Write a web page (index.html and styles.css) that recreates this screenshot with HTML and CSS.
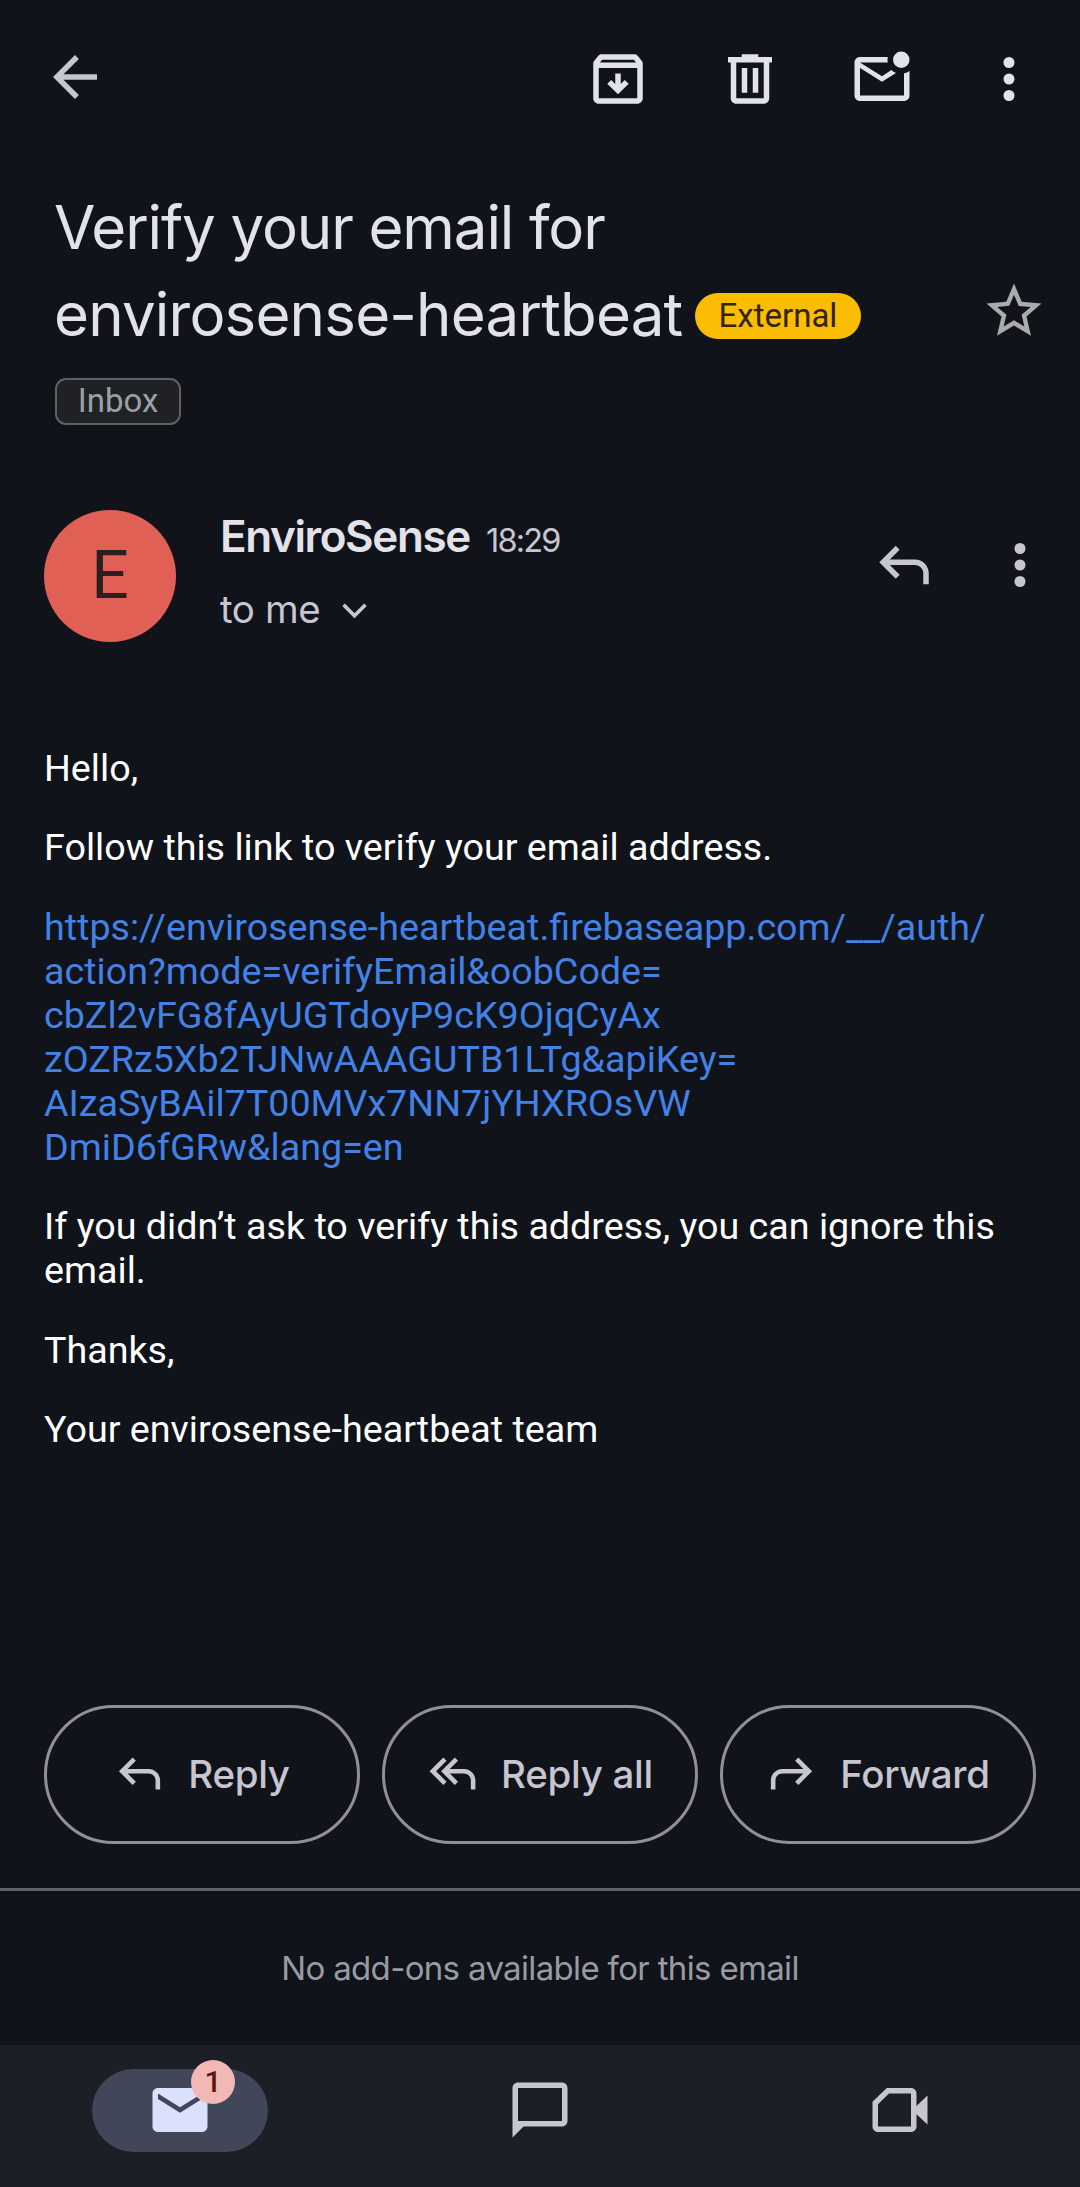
FILE: index.html
```
<!DOCTYPE html>
<html lang="en">
<head>
<meta charset="utf-8">
<title>Verify your email for envirosense-heartbeat</title>
<link rel="stylesheet" href="styles.css">
</head>
<body>
<div class="screen">
  <header class="topbar">
    <svg class="icon back" viewBox="0 0 24 24"><path d="M20 11H7.83l5.59-5.59L12 4l-8 8 8 8 1.41-1.41L7.83 13H20v-2z"/></svg>
    <div class="actions">
      <svg class="icon" viewBox="0 0 24 24"><path d="M20.54 5.23l-1.39-1.68C18.88 3.21 18.47 3 18 3H6c-.47 0-.88.21-1.16.55L3.46 5.23C3.17 5.57 3 6.02 3 6.5V19c0 1.1.9 2 2 2h14c1.1 0 2-.9 2-2V6.5c0-.48-.17-.93-.46-1.27zM6.24 5h11.52l.83 1H5.42l.82-1zM5 19V8h14v11H5z"/><path d="M11 10h2v3.800l1.450-1.450L15.900 13.700 12 17.500 8.100 13.700l1.450-1.350L11 13.800z"/></svg>
      <svg class="icon" viewBox="0 0 24 24"><path d="M9 3v1H4v2h1v13c0 1.100.9 2 2 2h10c1.100 0 2-.9 2-2V6h1V4h-5V3H9zM7 6h10v13H7V6zM9 8v9h2V8H9zm4 0v9h2V8h-2z"/></svg>
      <svg class="icon" viewBox="0 0 24 24"><circle cx="19" cy="5" r="3"/><path d="M14.100 4H4c-1.100 0-2 .9-2 2v12c0 1.100.9 2 2 2h16c1.100 0 2-.9 2-2V9c-.6.500-1.300.8-2 .95V18H4V8l8 5 5.100-3.200c-.65-.25-1.200-.6-1.700-1.050L12 11 4 6h10.100c-.15-.65-.15-1.350 0-2z"/></svg>
      <svg class="icon more" viewBox="0 0 24 24"><circle cx="12" cy="6" r="2"/><circle cx="12" cy="12" r="2"/><circle cx="12" cy="18" r="2"/></svg>
    </div>
  </header>

  <section class="subject">
    <div class="subject-text">
      <h1 class="title">Verify your email for</h1>
      <div class="title-line">
        <span class="title">envirosense-heartbeat</span>
        <span class="chip-external">External</span>
      </div>
      <span class="chip-inbox">Inbox</span>
    </div>
    <svg class="icon star" viewBox="0 0 24 24"><path d="M22 9.240l-7.190-.62L12 2 9.190 8.630 2 9.240l5.460 4.730L5.820 21 12 17.270 18.180 21l-1.630-7.030L22 9.240zM12 15.400l-3.760 2.270 1-4.280-3.320-2.880 4.380-.38L12 6.100l1.710 4.040 4.380.38-3.320 2.880 1 4.280L12 15.400z"/></svg>
  </section>

  <section class="sender">
    <div class="avatar">E</div>
    <div class="sender-info">
      <div class="name-line"><span class="name">EnviroSense</span><span class="time">18:29</span></div>
      <div class="to-line">to me<svg class="chevron" viewBox="0 0 24 14"><path d="M1.500 1.500L12 12 22.500 1.500"/></svg></div>
    </div>
    <div class="sender-actions">
      <svg class="icon" viewBox="0 0 24 24"><path d="M19 19v-4c0-1.660-1.340-3-3-3H6.830l3.590 3.590L9 17l-6-6 6-6 1.420 1.410L6.830 10H16c2.760 0 5 2.240 5 5v4h-2z"/></svg>
      <svg class="icon" viewBox="0 0 24 24"><circle cx="12" cy="6" r="2"/><circle cx="12" cy="12" r="2"/><circle cx="12" cy="18" r="2"/></svg>
    </div>
  </section>

  <main class="message">
    <p>Hello,</p>
    <p>Follow this link to verify your email address.</p>
    <p class="link">https://envirosense-heartbeat.firebaseapp.com/__/auth/<br>action?mode=verifyEmail&amp;oobCode=<br>cbZl2vFG8fAyUGTdoyP9cK9OjqCyAx<br>zOZRz5Xb2TJNwAAAGUTB1LTg&amp;apiKey=<br>AIzaSyBAil7T00MVx7NN7jYHXROsVW<br>DmiD6fGRw&amp;lang=en</p>
    <p>If you didn’t ask to verify this address, you can ignore this email.</p>
    <p>Thanks,</p>
    <p>Your envirosense-heartbeat team</p>
  </main>

  <div class="replies">
    <div class="pill"><svg class="icon-sm" viewBox="0 0 24 24"><path d="M19 19v-4c0-1.660-1.340-3-3-3H6.830l3.590 3.590L9 17l-6-6 6-6 1.420 1.410L6.830 10H16c2.760 0 5 2.240 5 5v4h-2z"/></svg><span>Reply</span></div>
    <div class="pill"><svg class="icon-sm" viewBox="0 0 24 24"><path d="M8 17l-6-6 6-6 1.420 1.410L4.830 11l4.590 4.590L8 17zM20 19v-4c0-1.660-1.340-3-3-3h-6.170l3.590 3.590L13 17l-6-6 6-6 1.420 1.410L10.830 10H17c2.760 0 5 2.240 5 5v4h-2z"/></svg><span>Reply all</span></div>
    <div class="pill"><svg class="icon-sm" viewBox="0 0 24 24"><path d="M5 19v-4c0-1.660 1.340-3 3-3h9.170l-3.590 3.590L15 17l6-6-6-6-1.420 1.410L17.170 10H8c-2.760 0-5 2.240-5 5v4h2z"/></svg><span>Forward</span></div>
  </div>

  <div class="addons">No add-ons available for this email</div>

  <nav class="bottom-nav">
    <div class="tab">
      <div class="tab-active">
        <svg class="icon" viewBox="0 0 24 24"><path d="M20 4H4c-1.100 0-2 .9-2 2v12c0 1.100.9 2 2 2h16c1.100 0 2-.9 2-2V6c0-1.100-.9-2-2-2zm0 4l-8 5-8-5V6l8 5 8-5v2z"/></svg>
        <span class="badge">1</span>
      </div>
    </div>
    <div class="tab"><svg class="icon" viewBox="0 0 24 24"><path d="M4 2c-1.100 0-2 .9-2 2v18l4-4h14c1.100 0 2-.9 2-2V4c0-1.100-.9-2-2-2H4zm0 2h16v12H4V4z"/></svg></div>
    <div class="tab"><svg class="icon" viewBox="0 0 24 24"><path d="M7.200 4L2 9v9c0 1.100.9 2 2 2h12c1.100 0 2-.9 2-2v-4.500l4 3.800V6.700l-4 3.800V6c0-1.100-.9-2-2-2H7.200zM8 6h8v12H4V9.900L8 6z"/></svg></div>
  </nav>
</div>
</body>
</html>
```
FILE: styles.css
```
* { box-sizing: border-box; }

body {
  margin: 0;
  background: #10131a;
  color: #e3e2e9;
  font-family: Inter, "Liberation Sans", sans-serif;
}

.screen {
  display: flex;
  flex-direction: column;
  width: 1080px;
  height: 2187px;
  overflow: hidden;
}

.icon { display: block; flex: none; width: 66px; height: 66px; fill: currentColor; }
.icon-sm { display: block; flex: none; width: 55px; height: 55px; fill: currentColor; }

/* Top bar */
.topbar {
  display: flex;
  justify-content: space-between;
  align-items: flex-start;
  height: 184px;
  padding: 46px 38px 0 42px;
}
.back { color: #c6c5d0; margin-top: -2px; }
.actions { display: flex; gap: 66px; }
.more { margin-left: -5px; }

/* Subject */
.subject {
  display: flex;
  justify-content: space-between;
  height: 322px;
  padding: 0 33px 0 54px;
}
.title {
  margin: 0;
  font-size: 60px;
  font-weight: 400;
  line-height: 87px;
  letter-spacing: -1.1px;
  white-space: nowrap;
}
.title-line { display: flex; align-items: center; height: 87px; }
.title-line .title { width: 641px; letter-spacing: -0.8px; }
.chip-external {
  width: 166px;
  height: 46px;
  margin-top: 3px;
  border-radius: 23px;
  background: #fbbc04;
  color: #33240a;
  font: 400 33px/46px Roboto, sans-serif;
  text-align: center;
}
.chip-inbox {
  display: block;
  width: 126px;
  height: 47px;
  margin: 20px 0 0 1px;
  border: 2px solid #5f6163;
  border-radius: 11px;
  background: #202124;
  color: #9aa0a6;
  font: 400 33px/41px Roboto, sans-serif;
  text-align: center;
}
.star { margin-top: 94px; color: #ababae; }

/* Sender */
.sender { display: flex; height: 240px; padding: 0 27px 0 44px; }
.avatar {
  width: 132px;
  height: 132px;
  margin-top: 4px;
  border-radius: 50%;
  background: #e06055;
  color: #2b1f20;
  font: 400 66px/132px Roboto, sans-serif;
  text-align: center;
}
.sender-info { flex: 1; padding-left: 44px; }
.name-line { display: flex; align-items: baseline; height: 60px; line-height: 60px; }
.name { width: 266px; font-size: 44px; font-weight: 600; letter-spacing: -1.4px; }
.time { color: #c6c5d0; font-size: 32.5px; letter-spacing: -1.8px; }
.to-line {
  display: flex;
  align-items: center;
  gap: 22px;
  margin-top: 18px;
  color: #c6c5d0;
  font-size: 38.5px;
  line-height: 50px;
  letter-spacing: -0.4px;
}
.chevron { width: 25px; height: 15px; margin-top: 3px; fill: none; stroke: currentColor; stroke-width: 3.6; }
.sender-actions { display: flex; gap: 50px; padding-top: 26px; color: #c6c5d0; }

/* Message */
.message {
  height: 959px;
  padding: 0 44px;
  color: #fff;
  font: 400 37.68px/44px Roboto, sans-serif;
}
.message p { margin: 0 0 35.4px; }
.message .link { color: #4481e5; white-space: nowrap; }

/* Reply actions */
.replies { display: flex; gap: 22px; height: 183px; padding: 0 44px; color: #c6c5d0; }
.pill {
  flex: 1;
  display: flex;
  justify-content: center;
  align-items: center;
  gap: 21px;
  height: 139px;
  padding: 0 2px 2px 0;
  border: 3px solid #8f9099;
  border-radius: 70px;
  font-size: 38.5px;
  font-weight: 500;
  letter-spacing: -0.3px;
  white-space: nowrap;
}

.addons {
  height: 157px;
  border-top: 3px solid #5f6366;
  color: #999ba3;
  font-size: 33px;
  line-height: 155px;
  letter-spacing: -0.66px;
  text-align: center;
}

/* Bottom navigation */
.bottom-nav { display: flex; flex: 1; padding-top: 24px; background: #1d1f26; color: #c6c5d0; }
.tab { flex: 1; display: flex; justify-content: center; align-items: center; height: 83px; }
.tab .icon { margin-bottom: 2px; }
.tab-active {
  position: relative;
  display: flex;
  justify-content: center;
  align-items: center;
  width: 176px;
  height: 83px;
  border-radius: 42px;
  background: #414659;
  color: #dce1fb;
}
.badge {
  position: absolute;
  top: -9px;
  left: 99px;
  width: 44px;
  height: 44px;
  border-radius: 50%;
  background: #f2b8b5;
  color: #601410;
  font: 500 30px/44px Roboto, sans-serif;
  text-align: center;
}
```
